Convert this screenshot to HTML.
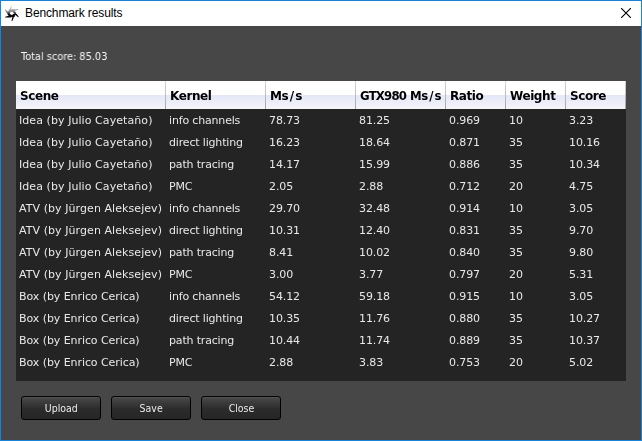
<!DOCTYPE html>
<html><head><meta charset="utf-8"><title>Benchmark results</title>
<style>
html,body{margin:0;padding:0;}
body{width:642px;height:441px;overflow:hidden;background:#474747;position:relative;font-family:"DejaVu Sans","Liberation Sans",sans-serif;}
.win{position:absolute;left:0;top:0;width:640px;height:439px;border:1px solid #1883d7;background:#474747;}
.win>*{position:absolute;}
.total,.thead,.tbody,.btn{will-change:transform;}
.titlebar{left:0;top:0;width:640px;height:25px;background:#fff;}
.titlebar>*{position:absolute;}
.title{left:24px;top:4px;letter-spacing:-0.12px;font-family:"Liberation Sans",sans-serif;font-size:12px;line-height:16px;color:#000;white-space:nowrap;}
.closex{left:620px;top:7px;width:10px;height:10px;}
.icon{overflow:visible;}
.total{left:20px;top:49px;font-family:"DejaVu Sans Condensed","DejaVu Sans",sans-serif;font-size:11px;line-height:14px;color:#f6f6f6;white-space:nowrap;transform-origin:0 50%;transform:scaleX(0.988);}
.thead{left:15px;top:80px;width:610px;height:28px;background:linear-gradient(#ffffff 0,#ffffff 14px,#e3e7f7 14px,#ecedf8 21px,#f6f6f9 28px);}
.thead>*{position:absolute;}
.th{top:1px;height:28px;font-weight:bold;font-size:12px;letter-spacing:-0.4px;line-height:28px;color:#000;white-space:nowrap;}
.th i{font-style:normal;margin:0 1.5px;}.th b{letter-spacing:-0.8px;}
.sep{top:0;width:1px;height:28px;background:linear-gradient(#d4d4d8,#a4a4ac);}
.tbody{left:15px;top:108px;width:610px;height:272px;background:#242424;}
.td{position:absolute;height:22px;font-size:11px;line-height:22px;margin-top:1px;color:#e8e8e8;white-space:nowrap;}
.c0{letter-spacing:0.07px}.c0b{letter-spacing:-0.07px}.c1{letter-spacing:-0.17px}.cn{letter-spacing:-0.12px}
.btn{top:395px;width:78px;height:22px;border:1px solid #020202;border-radius:3px;background:linear-gradient(#4a4a4a,#393939 30%,#2b2b2b 55%,#262626);box-shadow:inset 0 1px 0 rgba(255,255,255,0.05);color:#ececec;font-family:"DejaVu Sans Condensed","DejaVu Sans",sans-serif;font-size:11px;line-height:24px;text-align:center;}
.btn span{display:inline-block;transform:scaleX(0.95);}
</style></head><body>
<div class="win">
<div class="titlebar">
<svg class="icon" style="left:3px;top:4px;width:18px;height:18px" viewBox="0 0 18 18"><defs><linearGradient id="og" gradientUnits="userSpaceOnUse" x1="0" y1="-7.5" x2="0" y2="7.5"><stop offset="0" stop-color="#e4e4e4"/><stop offset="0.3" stop-color="#a4a4a4"/><stop offset="0.46" stop-color="#5a5a5a"/><stop offset="0.58" stop-color="#0c0c0c"/><stop offset="1" stop-color="#000"/></linearGradient></defs><g transform="translate(7.75,8.3)" fill="url(#og)"><path d="M3.30,1.20 L2.90,3.70 Q-2.00,3.90 -6.70,4.30 L-6.60,3.50 Q-3.60,2.70 -1.80,1.80 Z M0.61,3.46 L-1.75,4.36 Q-4.38,0.22 -7.07,-3.65 L-6.33,-3.97 Q-4.14,-1.77 -2.46,-0.66 Z M-2.69,2.26 L-4.65,0.66 Q-2.38,-3.68 -0.37,-7.95 L0.27,-7.47 Q-0.54,-4.47 -0.66,-2.46 Z M-3.30,-1.20 L-2.90,-3.70 Q2.00,-3.90 6.70,-4.30 L6.60,-3.50 Q3.60,-2.70 1.80,-1.80 Z M-0.61,-3.46 L1.75,-4.36 Q4.38,-0.22 7.07,3.65 L6.33,3.97 Q4.14,1.77 2.46,0.66 Z M2.69,-2.26 L4.65,-0.66 Q2.38,3.68 0.37,7.95 L-0.27,7.47 Q0.54,4.47 0.66,2.46 Z"/><path fill-rule="evenodd" d="M3.6,0 A3.6,3.6 0 1,1 -3.6,0 A3.6,3.6 0 1,1 3.6,0 Z M2.55,0 A2.55,2.55 0 1,0 -2.55,0 A2.55,2.55 0 1,0 2.55,0 Z"/></g></svg>
<div class="title">Benchmark results</div>
<svg class="closex" viewBox="0 0 10 10"><path d="M0,0 L10,10 M10,0 L0,10" stroke="#000" stroke-width="1.15" fill="none"/></svg>
</div>
<div class="total">Total score: 85.03</div>
<div class="thead">
<div class="th" style="left:4px">Scene</div>
<div class="th" style="left:154px">Kernel</div><div class="sep" style="left:149px"></div>
<div class="th" style="left:254px">Ms<i>/</i>s</div><div class="sep" style="left:249px"></div>
<div class="th" style="left:344px;transform-origin:0 50%;transform:scaleX(0.976)"><b>GTX980</b> Ms<i>/</i>s</div><div class="sep" style="left:339px"></div>
<div class="th" style="left:434px">Ratio</div><div class="sep" style="left:429px"></div>
<div class="th" style="left:494px">Weight</div><div class="sep" style="left:489px"></div>
<div class="th" style="left:554px">Score</div><div class="sep" style="left:549px"></div>
<div class="sep" style="left:609px"></div>
</div>
<div class="tbody">
<div class="td c0" style="left:3px;top:0px">Idea (by Julio Cayetaño)</div><div class="td c1" style="left:153px;top:0px">info channels</div><div class="td cn" style="left:253px;top:0px">78.73</div><div class="td cn" style="left:343px;top:0px">81.25</div><div class="td cn" style="left:433px;top:0px">0.969</div><div class="td cn" style="left:493px;top:0px">10</div><div class="td cn" style="left:553px;top:0px">3.23</div>
<div class="td c0" style="left:3px;top:22px">Idea (by Julio Cayetaño)</div><div class="td c1" style="left:153px;top:22px">direct lighting</div><div class="td cn" style="left:253px;top:22px">16.23</div><div class="td cn" style="left:343px;top:22px">18.64</div><div class="td cn" style="left:433px;top:22px">0.871</div><div class="td cn" style="left:493px;top:22px">35</div><div class="td cn" style="left:553px;top:22px">10.16</div>
<div class="td c0" style="left:3px;top:44px">Idea (by Julio Cayetaño)</div><div class="td c1" style="left:153px;top:44px">path tracing</div><div class="td cn" style="left:253px;top:44px">14.17</div><div class="td cn" style="left:343px;top:44px">15.99</div><div class="td cn" style="left:433px;top:44px">0.886</div><div class="td cn" style="left:493px;top:44px">35</div><div class="td cn" style="left:553px;top:44px">10.34</div>
<div class="td c0" style="left:3px;top:66px">Idea (by Julio Cayetaño)</div><div class="td c1" style="left:153px;top:66px">PMC</div><div class="td cn" style="left:253px;top:66px">2.05</div><div class="td cn" style="left:343px;top:66px">2.88</div><div class="td cn" style="left:433px;top:66px">0.712</div><div class="td cn" style="left:493px;top:66px">20</div><div class="td cn" style="left:553px;top:66px">4.75</div>
<div class="td c0" style="left:3px;top:88px">ATV (by Jürgen Aleksejev)</div><div class="td c1" style="left:153px;top:88px">info channels</div><div class="td cn" style="left:253px;top:88px">29.70</div><div class="td cn" style="left:343px;top:88px">32.48</div><div class="td cn" style="left:433px;top:88px">0.914</div><div class="td cn" style="left:493px;top:88px">10</div><div class="td cn" style="left:553px;top:88px">3.05</div>
<div class="td c0" style="left:3px;top:110px">ATV (by Jürgen Aleksejev)</div><div class="td c1" style="left:153px;top:110px">direct lighting</div><div class="td cn" style="left:253px;top:110px">10.31</div><div class="td cn" style="left:343px;top:110px">12.40</div><div class="td cn" style="left:433px;top:110px">0.831</div><div class="td cn" style="left:493px;top:110px">35</div><div class="td cn" style="left:553px;top:110px">9.70</div>
<div class="td c0" style="left:3px;top:132px">ATV (by Jürgen Aleksejev)</div><div class="td c1" style="left:153px;top:132px">path tracing</div><div class="td cn" style="left:253px;top:132px">8.41</div><div class="td cn" style="left:343px;top:132px">10.02</div><div class="td cn" style="left:433px;top:132px">0.840</div><div class="td cn" style="left:493px;top:132px">35</div><div class="td cn" style="left:553px;top:132px">9.80</div>
<div class="td c0" style="left:3px;top:154px">ATV (by Jürgen Aleksejev)</div><div class="td c1" style="left:153px;top:154px">PMC</div><div class="td cn" style="left:253px;top:154px">3.00</div><div class="td cn" style="left:343px;top:154px">3.77</div><div class="td cn" style="left:433px;top:154px">0.797</div><div class="td cn" style="left:493px;top:154px">20</div><div class="td cn" style="left:553px;top:154px">5.31</div>
<div class="td c0b" style="left:3px;top:176px">Box (by Enrico Cerica)</div><div class="td c1" style="left:153px;top:176px">info channels</div><div class="td cn" style="left:253px;top:176px">54.12</div><div class="td cn" style="left:343px;top:176px">59.18</div><div class="td cn" style="left:433px;top:176px">0.915</div><div class="td cn" style="left:493px;top:176px">10</div><div class="td cn" style="left:553px;top:176px">3.05</div>
<div class="td c0b" style="left:3px;top:198px">Box (by Enrico Cerica)</div><div class="td c1" style="left:153px;top:198px">direct lighting</div><div class="td cn" style="left:253px;top:198px">10.35</div><div class="td cn" style="left:343px;top:198px">11.76</div><div class="td cn" style="left:433px;top:198px">0.880</div><div class="td cn" style="left:493px;top:198px">35</div><div class="td cn" style="left:553px;top:198px">10.27</div>
<div class="td c0b" style="left:3px;top:220px">Box (by Enrico Cerica)</div><div class="td c1" style="left:153px;top:220px">path tracing</div><div class="td cn" style="left:253px;top:220px">10.44</div><div class="td cn" style="left:343px;top:220px">11.74</div><div class="td cn" style="left:433px;top:220px">0.889</div><div class="td cn" style="left:493px;top:220px">35</div><div class="td cn" style="left:553px;top:220px">10.37</div>
<div class="td c0b" style="left:3px;top:242px">Box (by Enrico Cerica)</div><div class="td c1" style="left:153px;top:242px">PMC</div><div class="td cn" style="left:253px;top:242px">2.88</div><div class="td cn" style="left:343px;top:242px">3.83</div><div class="td cn" style="left:433px;top:242px">0.753</div><div class="td cn" style="left:493px;top:242px">20</div><div class="td cn" style="left:553px;top:242px">5.02</div>
</div>
<div class="btn" style="left:20px"><span>Upload</span></div>
<div class="btn" style="left:110px"><span>Save</span></div>
<div class="btn" style="left:200px"><span>Close</span></div>
</div>
</body></html>
